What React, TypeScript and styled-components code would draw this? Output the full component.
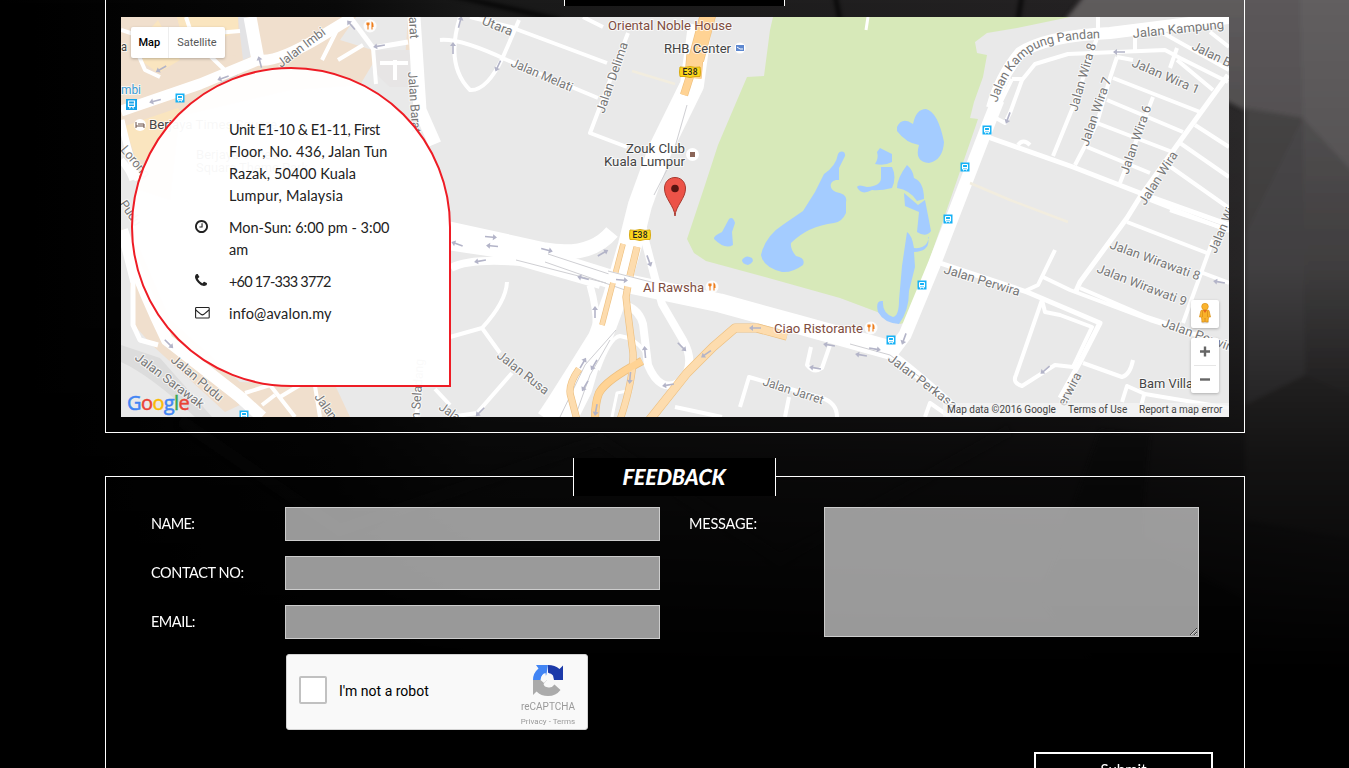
import React from 'react';
import styled, { createGlobalStyle } from 'styled-components';

const GlobalStyle = createGlobalStyle`
  * { box-sizing: border-box; }
  html, body { margin: 0; padding: 0; background: #000; }
  body { overflow: hidden; font-family: Lato, 'Open Sans', sans-serif; font-size: 15px; }
`;

const Page = styled.div`
  position: relative;
  width: 1349px;
  height: 768px;
  overflow: hidden;
  background: #000;
`;

const Backdrop = styled.svg`
  position: absolute;
  inset: 0;
`;

const Container = styled.main`
  position: relative;
  width: 1140px;
  margin-left: 105px;
`;

const Panel = styled.section<{ $open?: 'top' | 'bottom' }>`
  position: relative;
  border: 1px solid #fff;
  ${(p) => p.$open === 'top' && 'border-top: 0; height: 433px; padding: 17px 15px 15px;'}
  ${(p) => p.$open === 'bottom' && 'border-bottom: 0; height: 292px; margin-top: 43px; padding: 30px 45px 0;'}
`;

const PanelTitle = styled.h2<{ $top: number; $left: number; $width: number }>`
  position: absolute;
  top: ${(p) => p.$top}px;
  left: ${(p) => p.$left}px;
  width: ${(p) => p.$width}px;
  height: 38px;
  margin: 0;
  display: flex;
  align-items: center;
  justify-content: center;
  background: #000;
  border: solid #fff;
  border-width: 0 1px;
`;

const BrushText = styled.span`
  color: #fff;
  font: italic 900 22px/38px Lato, sans-serif;
  white-space: nowrap;
  transform: scaleX(0.97) skewX(-3deg);
`;

const MapFrame = styled.div`
  position: relative;
  width: 1108px;
  height: 400px;
  overflow: hidden;
  font-family: Roboto, Arial, sans-serif;
`;

const MapDrawing = styled.svg`
  display: block;
`;

const MapTypes = styled.div`
  position: absolute;
  top: 10px;
  left: 10px;
  display: flex;
  height: 31px;
  background: #fff;
  border-radius: 2px;
  box-shadow: 0 1px 3px rgba(0, 0, 0, 0.25);
  font-size: 11px;
  line-height: 31px;
`;

const MapType = styled.span<{ $active?: boolean }>`
  padding: 0 8px 0 ${(p) => (p.$active ? 7.5 : 8)}px;
  color: ${(p) => (p.$active ? '#000' : '#565656')};
  font-weight: ${(p) => (p.$active ? 500 : 400)};
  & + & { border-left: 1px solid #eee; }
`;

const MapControls = styled.div`
  position: absolute;
  right: 10px;
  bottom: 24px;
  width: 28px;
  display: flex;
  flex-direction: column;
  gap: 10px;
`;

const ControlBox = styled.div`
  display: flex;
  flex-direction: column;
  align-items: center;
  background: #fff;
  border-radius: 2px;
  box-shadow: 0 1px 3px rgba(0, 0, 0, 0.25);
  svg { display: block; }
`;

const ControlLine = styled.i`
  width: 22px;
  height: 1px;
  background: #e6e6e6;
`;

const Attribution = styled.div`
  position: absolute;
  right: 0;
  bottom: 0;
  height: 14px;
  display: flex;
  gap: 12px;
  padding: 0 7px 0 4px;
  background: rgba(245, 245, 245, 0.7);
  color: #444;
  font-size: 10px;
  line-height: 14px;
`;

const Credit = styled.span<{ $width: number }>`
  width: ${(p) => p.$width}px;
  white-space: nowrap;
`;

const GoogleMark = styled.div`
  position: absolute;
  left: 6px;
  bottom: 2px;
  font: 400 20px/24px 'Open Sans', sans-serif;
  letter-spacing: -0.6px;
  -webkit-text-stroke: 0.5px currentColor;
`;

const Letter = styled.span<{ $color: string }>`
  color: ${(p) => p.$color};
`;

const ContactBubble = styled.address`
  position: absolute;
  left: 10px;
  top: 50px;
  width: 320px;
  height: 320px;
  padding: 50px 50px 0 62px;
  display: flex;
  flex-direction: column;
  gap: 10px;
  border: 2px solid #ee1c25;
  border-radius: 50% 50% 0 50%;
  background: rgba(255, 255, 255, 0.96);
  color: #222;
  font: normal 14.5px/22px Lato, sans-serif;
`;

const ContactRow = styled.div`
  display: grid;
  grid-template-columns: 34px 1fr;
  svg { margin-top: 3px; }
`;

const ContactLine = styled.span<{ $spacing: number }>`
  display: block;
  white-space: nowrap;
  letter-spacing: ${(p) => p.$spacing}px;
`;

const FormGrid = styled.form`
  display: grid;
  grid-template-columns: 509px 510px;
  column-gap: 29px;
`;

const Fields = styled.div`
  display: flex;
  flex-direction: column;
  gap: 15px;
`;

const Field = styled.label<{ $labelWidth: number }>`
  display: grid;
  grid-template-columns: ${(p) => p.$labelWidth}px 375px;
`;

const FieldName = styled.span<{ $spacing: number }>`
  color: #fff;
  font-size: 14.5px;
  line-height: 33px;
  letter-spacing: ${(p) => p.$spacing}px;
`;

const TextInput = styled.input`
  height: 34px;
  border: 1px solid #ccc;
  border-radius: 0;
  background: rgba(255, 255, 255, 0.6);
`;

const MessageInput = styled.textarea`
  height: 130px;
  width: 375px;
  border: 1px solid #ccc;
  background: rgba(255, 255, 255, 0.6);
`;

const Captcha = styled.div`
  width: 302px;
  height: 76px;
  margin-left: 135px;
  display: flex;
  align-items: center;
  padding: 0 11px 0 12px;
  border: 1px solid #d3d3d3;
  border-radius: 3px;
  background: #f9f9f9;
  font-family: Roboto, sans-serif;
`;

const CheckBox = styled.span`
  width: 28px;
  height: 28px;
  margin-top: -4px;
  border: 2px solid #c1c1c1;
  border-radius: 2px;
  background: #fff;
`;

const CaptchaText = styled.span`
  flex: 1;
  margin: -2px 0 0 12px;
  color: #000;
  font-size: 14px;
`;

const CaptchaBrand = styled.div`
  width: 56px;
  padding-top: 9px;
  display: flex;
  flex-direction: column;
  align-items: center;
  color: #9a9a9a;
  white-space: nowrap;
`;

const BrandName = styled.span`
  margin-top: 4px;
  font-size: 10px;
  line-height: 14px;
`;

const BrandLinks = styled.span`
  font-size: 8px;
  line-height: 15px;
`;

const SubmitButton = styled.button`
  display: block;
  width: 179px;
  height: 38px;
  margin: 22px 0 0 883px;
  border: 2px solid #fff;
  background: #000;
  color: #fff;
  font: 15px/31px Lato, sans-serif;
  padding: 0 0 3px;
`;

type Pt = string;

const cityBlocks: Pt[] = [
  '121,17 356,17 340,40 405,60 408,17 345,17 420,17 405,75 375,60 360,85 290,90 121,130',
  '121,130 135,118 180,110 170,200 140,190',
  '122,228 138,270 160,330 250,400 258,417 350,417 335,385 240,382 170,320 140,250',
  '130,283 140,283 166,340 240,405 225,412 152,345 134,325',
];
const warmBlocks: Pt[] = [
  '142,38 158,20 168,38 180,60 158,73 143,62',
  '177,17 238,17 238,32 198,49 182,36',
  '125,126 178,108 185,118 150,160 136,160',
];

const park =
  'M773 17L770 30L764 76L747 77L738 98L718 145L705 185L687 239L694 253L706 261L765 277L840 298L880 313L900 324L908 322L975 128L978 119L970 118L974 102L983 77L987 55L977 53L975 42L987 33L1017 28L1070 17Z';

const ponds = [
  'M838 154C840 150 846 151 845 156L839 168V180C829 179 828 189 836 192Q848 194 846 202V213Q842 222 834 223Q808 226 791 243Q790 249 796 256Q806 258 803 265Q792 273 782 272Q763 267 761 255Q765 236 784 224L803 211L815 192L824 174Q836 166 838 154Z',
  'M729 219Q733 216 735 223L732 232L733 245Q725 250 714 239Q713 236 722 232Z',
  'M742 260Q746 254 752 258Q755 262 748 265Q742 264 742 260Z',
  'M880 148L892 154V162Q885 166 875 164Q879 158 877 152Z',
  'M881 167L892 167Q897 177 892 188Q880 191 872 190Q861 196 857 187Q858 184 867 187Q881 186 881 178Z',
  'M897 127Q902 116 913 124Q916 109 926 109Q938 112 944 142Q943 160 929 163Q914 162 919 145Q906 143 897 131Z',
  'M907 165Q913 170 914 178Q924 182 924 199L917 201Q910 190 897 188Q897 178 907 165Z',
  'M904 193L918 205L925 200L931 231Q926 238 917 232L919 212L905 206Z',
  'M907 232Q912 235 914 248Q923 249 927 243Q930 236 928 237Q931 251 914 252L915 267L909 291Q909 311 899 324Q884 323 878 312Q875 300 883 301Q882 313 893 317Q899 316 899 300L902 266Z',
];

type Road = [string, number, string?];
const roads: Road[] = [
  ['M121 111L200 84L258 60Q277 63 320 37L353 17', 11],
  ['M250 17L258 60', 13],
  ['M414 17L420 110L435 144', 13],
  ['M350 17L373 48L408 42', 5],
  ['M373 48L376 84M380 63H408M395 60V80M363 45L338 60M322 60L337 30M186 17L192 35L207 53L230 75M192 35L240 31M134 45L145 70L160 77M121 30L140 36', 4],
  ['M121 120Q130 160 138 180M121 160Q130 170 133 180', 7],
  ['M122 230Q140 285 167 340L240 397L262 417', 12],
  ['M122 240L133 283V325L140 340L158 345', 5],
  ['M245 393L270 385L295 417M262 405L275 395M280 397L305 382M315 386L320 417M417 380Q420 400 416 417M435 389L450 405', 4],
  ['M445 240Q500 248 530 254L620 282L720 303L800 325L890 350', 19],
  ['M445 228Q500 240 545 250Q590 258 612 232', 15],
  ['M451 268Q470 258 520 262L600 285', 8],
  ['M700 25L692 85L660 150L640 205L630 245L614 300L600 338L580 370L558 405L548 420', 24],
  ['M627 270L598 345L585 390L570 420', 14],
  ['M640 210L645 240L655 278L662 304L683 340Q697 365 680 382Q660 394 648 365L643 324Q639 310 627 306', 8],
  ['M590 285Q597 310 596 325', 7],
  ['M598 370Q610 337 620 336Q635 338 645 352', 4],
  ['M612 417L617 393L632 390', 3],
  ['M998 100L990 120L958 203L934 265L905 335L890 355', 13],
  ['M992 108Q1000 77 1020 53Q1045 36 1110 33L1229 18', 12],
  ['M994 117L1005 123L1010 113L1022 80L1035 64L1068 54L1165 50L1180 58L1228 82M1012 79H1022M994 116L1012 79', 4],
  ['M985 136L1073 167L1140 193L1229 225M1228 75L1183 137L1140 197L1127 218L1080 282L1076 291', 5],
  ['M1053 156L1073 107L1098 35V17M1117 57L1110 78L1097 123L1075 165M1153 97L1120 183M1135 33V50M1113 78L1200 112M1107 100L1183 132M1097 123L1175 153M1087 147L1150 173M1117 57L1133 60M1195 125L1229 147M1180 143L1229 177M1168 165L1229 208M1150 200L1229 231M1177 48L1170 68M1177 60L1213 90M1163 33L1229 70M1210 32L1229 47', 4],
  ['M1018 145Q1023 138 1030 145M1127 222L1207 253M1170 210L1229 230M1213 240L1183 323M1203 273L1229 283', 4],
  ['M940 263L1027 292L1100 323L1080 362L1060 398', 5],
  ['M1042 300L1045 312L1060 315L1092 327L1073 367L1055 365L1022 386Q1012 383 1016 375L1042 300M1055 250L1038 285L1025 291M1043 277L1070 290L1150 320L1229 345M1080 288L1147 317L1190 331M1083 363L1122 377Q1130 375 1133 360M1122 402L1127 386L1145 394L1229 408M1144 395L1140 410', 4],
  ['M870 340Q900 357 958 411L968 420', 8],
  ['M507 282Q506 302 482 328L450 337M482 328L500 353M512 373L477 413L450 417M740 407L749 377L822 398Q837 403 837 417M789 397L785 417M811 347L807 365Q814 374 822 368L830 345M925 417L930 403L950 417M675 407L722 417', 4],
  ['M440 40Q460 38 507 60L598 98M519 20L503 57Q487 91 470 90Q445 65 460 17M513 28L607 63M583 17L603 27M628 33L590 133L627 147M470 17L515 28', 4],
  ['M868 17L866 30', 3],
  ['M632 71L675 84M970 183L1010 200L1068 222', 2.5, '#f2eddf'],
];

const ramps: Road[] = [
  ['M708 15L696 60', 15],
  ['M695 55L693 78', 16],
  ['M692 70L684 95', 7],
  ['M623 244L602 325', 4.5],
  ['M637 247L629 280L626 297Q628 315 633 353Q634 378 620 420', 6],
  ['M642 361Q606 380 599 393Q595 403 595 420', 7],
  ['M579 369Q567 386 571 397L577 420', 6],
  ['M787 336L757 328H735L713 347L687 373L648 422', 8],
];

const streetArrows: [number, number, number][] = [
  [161, 69, 150], [223, 78, 160], [155, 101, 165], [260, 62, 255], [351, 25, 230], [379, 46, 170],
  [460, 22, 285], [453, 48, 270], [498, 66, 115], [491, 237, 5], [492, 246, 185], [457, 244, 200],
  [480, 261, 170], [547, 250, 15], [603, 253, 330], [583, 278, 195], [622, 280, 5], [649, 261, 70],
  [595, 312, 270], [583, 363, 300], [594, 365, 120], [585, 386, 120], [596, 410, 100], [630, 378, 95],
  [645, 352, 265], [682, 347, 45], [668, 385, 170], [706, 354, 145], [755, 328, 180], [829, 345, 190],
  [861, 355, 190], [875, 349, 10], [904, 339, 110], [815, 368, 190], [1119, 52, 180], [1008, 118, 110],
  [1219, 282, 190], [1045, 370, 140], [480, 412, 135], [169, 344, 45],
];

const buses: [number, number][] = [[180, 98], [987, 130], [965, 167], [948, 219], [922, 285], [891, 340], [244, 415]];

interface Label {
  text: string;
  x: number;
  y: number;
  angle?: number;
  length: number;
  tone?: 'street' | 'place' | 'food' | 'transit';
}

const labels: Label[] = [
  { text: 'Jalan Imbi', x: 281, y: 68, angle: -37, length: 57 },
  { text: 'arat', x: 409, y: 17, angle: 87, length: 22 },
  { text: 'Jalan Barat', x: 408, y: 72, angle: 86, length: 61 },
  { text: 'Utara', x: 481, y: 24, angle: 22, length: 32 },
  { text: 'Jalan Melati', x: 510, y: 66, angle: 23, length: 66 },
  { text: 'Jalan Delima', x: 604, y: 114, angle: -71, length: 74 },
  { text: 'Lorong', x: 120, y: 150, angle: 50, length: 38 },
  { text: 'Pudu', x: 119, y: 204, angle: 55, length: 28 },
  { text: 'Jalan Sarawak', x: 134, y: 359, angle: 37, length: 83 },
  { text: 'Jalan Pudu', x: 170, y: 361, angle: 40, length: 64 },
  { text: 'Jalan', x: 314, y: 397, angle: 55, length: 29 },
  { text: 'Jalan Seladang', x: 418, y: 442, angle: -86, length: 83 },
  { text: 'Jalan', x: 438, y: 409, angle: 35, length: 29 },
  { text: 'Jalan Rusa', x: 496, y: 357, angle: 38, length: 62 },
  { text: 'Jalan Jarret', x: 762, y: 385, angle: 18, length: 63 },
  { text: 'Jalan Perkasa', x: 887, y: 360, angle: 37, length: 83 },
  { text: 'Jalan Perwira', x: 943, y: 273, angle: 17, length: 79 },
  { text: 'Jalan Kampung', x: 1133, y: 38, angle: -6, length: 92 },
  { text: 'Jalan B', x: 1191, y: 49, angle: 26, length: 42 },
  { text: 'Jalan Wira 1', x: 1131, y: 66, angle: 23, length: 72 },
  { text: 'Jalan Wira 8', x: 1077, y: 112, angle: -74, length: 70 },
  { text: 'Jalan Wira 7', x: 1088, y: 147, angle: -71, length: 72 },
  { text: 'Jalan Wira 6', x: 1128, y: 175, angle: -71, length: 72 },
  { text: 'Jalan Wira', x: 1145, y: 206, angle: -57, length: 61 },
  { text: 'Jalan Wira', x: 1216, y: 254, angle: -67, length: 59 },
  { text: 'Jalan Wirawati 8', x: 1109, y: 248, angle: 20, length: 95 },
  { text: 'Jalan Wirawati 9', x: 1096, y: 272, angle: 21, length: 95 },
  { text: 'Jalan Perwira', x: 1161, y: 326, angle: 20, length: 79 },
  { text: 'erwira', x: 1065, y: 407, angle: -62, length: 36 },
  { text: 'Oriental Noble House', x: 608, y: 30, length: 124, tone: 'food' },
  { text: 'RHB Center', x: 664, y: 53, length: 67, tone: 'place' },
  { text: 'Zouk Club', x: 626, y: 153, length: 59, tone: 'place' },
  { text: 'Kuala Lumpur', x: 604, y: 166, length: 81, tone: 'place' },
  { text: 'Al Rawsha', x: 643, y: 292, length: 61, tone: 'food' },
  { text: 'Ciao Ristorante', x: 774, y: 333, length: 89, tone: 'food' },
  { text: 'Bam Villa', x: 1139, y: 388, length: 54, tone: 'place' },
  { text: 'Berjaya Times Square', x: 149, y: 129, length: 128, tone: 'place' },
  { text: 'Berjaya Times', x: 196, y: 159, length: 82, tone: 'place' },
  { text: 'Square Theme Park', x: 196, y: 172, length: 112, tone: 'place' },
  { text: 'mbi', x: 121, y: 94, length: 20, tone: 'transit' },
  { text: 'a', x: 121, y: 51, length: 6, tone: 'place' },
];

const toneColor = { street: '#777', place: '#444', food: '#804d3f', transit: '#3a9bd5' };

const MapLabel = styled.text`
  font-family: Roboto, sans-serif;
  font-size: 12.7px;
  paint-order: stroke;
  stroke: #fff;
  stroke-opacity: 0.7;
  stroke-width: 2px;
  stroke-linejoin: round;
`;

const Shield = ({ x, y }: { x: number; y: number }) => (
  <g transform={`translate(${x} ${y})`}>
    <path d="M-10 -5Q-5 -4 0 -5.500Q5 -4 10 -5L10.500 0L10 4.500Q5 4 0 5.500Q-5 4 -10 4.500L-10.500 0Z" fill="#fcd51c" stroke="#d8aa10" strokeWidth="1" />
    <text x="-7.5" y="3.2" fontSize="8.5" fontWeight="500" fill="#222" textLength="15">E38</text>
  </g>
);

const BusStop = ({ x, y }: { x: number; y: number }) => (
  <g transform={`translate(${x - 4.5} ${y - 4.5})`}>
    <rect width="9" height="9" fill="#16b1f5" />
    <rect x="2" y="2" width="5" height="4.6" rx="0.6" fill="none" stroke="#fff" strokeWidth="1.1" />
    <path d="M2 5H7M2.5 7.5H3.5M5.5 7.5H6.5" stroke="#fff" />
  </g>
);

const Cutlery = ({ x, y }: { x: number; y: number }) => (
  <g transform={`translate(${x} ${y})`}>
    <circle r="6.5" fill="#fff" opacity=".85" />
    <path d="M-3 -3.5V-1.5Q-2 0 -1 -1.5V-3.5M-2 -3.5V3.5M2 3.5V-3.5Q3.3 -2.500 3 .5H2" fill="none" stroke="#ee7d1b" strokeWidth="1.1" />
  </g>
);

const StreetMap = () => (
  <MapDrawing width="1108" height="400" viewBox="121 17 1108 400">
    <rect x="121" y="17" width="1108" height="400" fill="#e9e9e9" />
    {cityBlocks.map((p) => <polygon key={p} points={p} fill="#f0dfcd" />)}
    {warmBlocks.map((p) => <polygon key={p} points={p} fill="#fae5bf" />)}
    <path d="M204 17H246L258 60L230 55L210 40Z" fill="#f0dfcd" />
    <path d="M177 17H238V31L200 48L182 35Z" fill="#fae5bf" />
    <path d="M375 50H410V87H390L372 70Z" fill="#e7e5e5" />
    <path d="M238 17H246L254 45L250 57L243 60Z" fill="#e3e3e5" />
    <path d="M121 345L160 358L212 417H195Q150 375 121 362Z" fill="#dcdcdc" />
    <path d={park} fill="#d7e9b9" />
    {ponds.map((d) => <path key={d} d={d} fill="#a4ccff" />)}
    {roads.map(([d, w, c]) => (
      <path key={d} d={d} fill="none" stroke={c || '#fff'} strokeWidth={w} strokeLinejoin="round" />
    ))}
    <path d="M220 83L238 75M687 105L675 147M672 160L654 195M516 260L606 283M548 254L612 275M545 262L625 290M616 330L585 365L560 417M610 340L590 375L575 417M850 344L890 355L940 392" fill="none" stroke="#cfcfd3" strokeWidth="1" />
    {ramps.map(([d, w]) => <path key={d} d={d} fill="none" stroke="#edbf7e" strokeWidth={w + 1.2} strokeLinejoin="round" />)}
    {ramps.map(([d, w]) => <path key={`${d}in`} d={d} fill="none" stroke={w > 6.5 && w !== 8 ? '#ffd394' : '#fddcae'} strokeWidth={w} strokeLinejoin="round" />)}
    <path d="M608 276L655 288" stroke="#fff" strokeWidth="11" />
    <path d="M608 271L655 283" stroke="#cfcfd3" />
    {streetArrows.map(([x, y, a]) => (
      <path key={`${x}-${y}`} transform={`translate(${x} ${y}) rotate(${a})`} d="M-6 -.8H2V-3L6 0L2 3V.8H-6Z" fill="#b3b4c8" />
    ))}
    {labels.map((l) => (
      <MapLabel
        key={`${l.text}${l.x}`}
        x={l.x}
        y={l.y}
        textLength={l.length}
        lengthAdjust="spacingAndGlyphs"
        fill={toneColor[l.tone || 'street']}
        transform={l.angle ? `rotate(${l.angle} ${l.x} ${l.y})` : undefined}
      >
        {l.text}
      </MapLabel>
    ))}
    <path id="pandan" d="M997 103Q1009 64 1036 49Q1060 38 1112 38" fill="none" />
    <MapLabel fill="#777"><textPath href="#pandan" textLength="134">Jalan Kampung Pandan</textPath></MapLabel>
    {buses.map(([x, y]) => <BusStop key={x} x={x} y={y} />)}
    <g transform="translate(126 99)">
      <rect width="11" height="11" fill="#16a4ea" />
      <path d="M2.5 2H8.5V7.5H2.5ZM2.5 5H8.5M3.5 9.5L4.5 7.5M7.5 9.5L6.5 7.5" fill="none" stroke="#fff" strokeWidth="1.2" />
    </g>
    <Shield x={690} y={72} />
    <Shield x={640} y={235} />
    <Cutlery x={370} y={26} />
    <Cutlery x={712} y={287} />
    <Cutlery x={871} y={328} />
    <circle cx="140" cy="125" r="6" fill="#fff" />
    <path d="M136 122V128M136 126H144V128M138 124H144V126" fill="none" stroke="#6b5147" />
    <circle cx="692.500" cy="154.500" r="6.500" fill="#fff" />
    <rect x="690" y="152" width="5" height="5" fill="#8a6558" />
    <circle cx="740" cy="48" r="5.500" fill="#fff" />
    <path d="M736 45H744V51H736Z" fill="#5d87cf" />
    <path d="M737 47L740 49H743" fill="none" stroke="#fff" />
    <path d="M675 216C674.500 206 664 198 664.500 188C665 174 685 174 685.500 188C686 198 675.500 206 675 216Z" fill="#ec5348" stroke="#a8382e" strokeWidth="1" />
    <circle cx="675" cy="188.500" r="3.800" fill="#571410" />
  </MapDrawing>
);

const ClockIcon = () => (
  <svg width="13" height="13" viewBox="128 128 1536 1536" fill="#222">
    <path d="M1024 544v448q0 14-9 23t-23 9h-320q-14 0-23-9t-9-23v-64q0-14 9-23t23-9h224v-352q0-14 9-23t23-9h64q14 0 23 9t9 23zm416 352q0-148-73-273t-198-198-273-73-273 73-198 198-73 273 73 273 198 198 273 73 273-73 198-198 73-273zm224 0q0 209-103 385.500t-279.500 279.500-385.500 103-385.500-103-279.500-279.500-103-385.500 103-385.500 279.500-279.500 385.500-103 385.500 103 279.500 279.500 103 385.500z" />
  </svg>
);

const PhoneIcon = () => (
  <svg width="12" height="12" viewBox="0 128 1408 1408" fill="#222">
    <path d="M1408 1240q0 27-10 70.500t-21 68.500q-21 50-122 106-94 51-186 51-27 0-53-3.500t-57.500-12.500-47-14.500-55.500-20.500-49-18q-98-35-175-83-127-79-264-216t-216-264q-48-77-83-175-3-9-18-49t-20.500-55.500-14.500-47-12.500-57.500-3.500-53q0-92 51-186 56-101 106-122 25-11 68.500-21t70.500-10q14 0 21 3 18 6 53 76 11 19 30 54t35 63.500 31 53.500q3 4 17.500 25t21.500 35.500 7 28.500q0 20-28.500 50t-62 55-62 53-28.500 46q0 9 5 22.500t8.500 20.500 14 24 11.500 19q76 137 174 235t235 174q2 1 19 11.500t24 14 20.500 8.500 22.500 5q18 0 46-28.500t53-62 55-62 50-28.500q14 0 28.500 7t35.500 21.500 25 17.500q25 15 53.500 31t63.500 35 54 30q70 35 76 53 3 7 3 21z" />
  </svg>
);

const MailIcon = () => (
  <svg width="15" height="14" viewBox="0 0 15 14" fill="none" stroke="#222" strokeWidth="1.100">
    <rect x=".6" y="1.500" width="13.600" height="10.500" rx=".8" />
    <path d="M.8 4L6 8.300Q7.400 9.400 8.800 8.300L14 4" />
  </svg>
);

const Pegman = () => (
  <svg width="28" height="28" viewBox="0 0 28 28">
    <ellipse cx="14" cy="22" rx="4" ry="1.600" fill="#ddd" />
    <path d="M10 10.500Q14 8.500 18 10.500L19.500 17H17.500L17 22H14.500L14 18L13.500 22H11L10.500 17H8.500Z" fill="#f9b22b" stroke="#d98d13" strokeWidth=".7" />
    <path d="M11.500 11V17M16.500 11V17" stroke="#d98d13" strokeWidth=".7" />
    <circle cx="14" cy="6.600" r="3.300" fill="#fbb42e" stroke="#d98d13" strokeWidth=".6" />
    <path d="M12 10L14 13L16 10Z" fill="#e4671f" />
  </svg>
);

const RecaptchaLogo = () => (
  <svg width="32" height="32" viewBox="0 0 32 32">
    <path d="M31 16V1.500L27.500 5Q23 1 16 1L16 9Q19.500 9 21 11.500L17 16Z" fill="#1c3aa9" />
    <path d="M16 1H4L6.500 4.500Q1 9 1 16H9Q9 10 13.500 9L14 13Z" fill="#4285f4" />
    <path d="M1 16V31L4.500 27.500Q9 32 16 32Q24 32 28.500 26L22.500 20.500Q20 24 16.500 23.500Q12 23 11.500 20L15 16Z" fill="#ababab" />
    <path d="M8.500 16Q9 11 13 10L13.500 12.500L16.500 8.500L18.500 12L21 11.500L22 16H15L12 19Z" fill="#f9f9f9" />
  </svg>
);

const Facets = () => (
  <Backdrop width="1349" height="768" viewBox="0 0 1349 768">
    <defs>
      <linearGradient id="shade" x1="0" y1="0" x2="0" y2="1">
        <stop offset="0" stopColor="#000" stopOpacity="0" />
        <stop offset=".35" stopColor="#000" stopOpacity=".18" />
        <stop offset=".6" stopColor="#000" stopOpacity=".68" />
        <stop offset=".88" stopColor="#000" />
      </linearGradient>
      <linearGradient id="side" x1="0" y1="0" x2="1" y2="0">
        <stop offset="0" stopColor="#000" />
        <stop offset=".25" stopColor="#0a0a0a" />
        <stop offset=".35" stopColor="#191919" />
        <stop offset=".8" stopColor="#242223" />
        <stop offset="1" stopColor="#353334" />
      </linearGradient>
      <linearGradient id="fold" x1="0" y1="0" x2="0" y2="1">
        <stop offset="0" stopColor="#5f5c5d" />
        <stop offset=".5" stopColor="#4f4d4e" />
        <stop offset="1" stopColor="#343233" />
      </linearGradient>
      <filter id="soften"><feGaussianBlur stdDeviation="2" /></filter>
    </defs>
    <rect width="1349" height="768" fill="url(#side)" />
    <g filter="url(#soften)">
      <path d="M1085 -5H1360V520L1245 480V110L1065 20Z" fill="url(#fold)" />
      <path d="M1245 -5H1300L1303 118L1245 108Z" fill="#5c595a" />
      <path d="M1300 -5H1360V180L1303 118Z" fill="#625f60" />
      <path d="M1245 108L1303 118L1245 235Z" fill="#4b494a" />
      <path d="M1303 118L1305 375L1245 405V235Z" fill="#504e4f" />
      <path d="M1305 375L1245 405V520L1360 540V400Z" fill="#3c3a3b" />
      <path d="M1100 430L1150 435L1140 540L1245 600V720H1140L1040 600Z" fill="#1c1b1c" />
      <path d="M450 -5L560 20M835 -5L840 20M1022 -5L1018 20" stroke="#090909" strokeWidth="3" />
      <path d="M180 420L340 530L600 440L780 560L1010 430" fill="none" stroke="#1a1a1a" strokeWidth="12" opacity=".3" />
    </g>
    <rect width="1349" height="768" fill="url(#shade)" />
  </Backdrop>
);

const googleLetters: [string, string][] = [
  ['G', '#4285f4'], ['o', '#ea4335'], ['o', '#fbbc05'], ['g', '#4285f4'], ['l', '#34a853'], ['e', '#ea4335'],
];

export default function App() {
  return (
    <Page>
      <GlobalStyle />
      <Facets />
      <Container>
        <Panel $open="top">
          <PanelTitle $top={-32} $left={458} $width={221} />
          <MapFrame>
            <StreetMap />
            <ContactBubble>
              <ContactRow>
                <span />
                <div>
                  <ContactLine $spacing={-0.45}>Unit E1-10 &amp; E1-11, First</ContactLine>
                  <ContactLine $spacing={0.1}>Floor, No. 436, Jalan Tun</ContactLine>
                  <ContactLine $spacing={0.1}>Razak, 50400 Kuala</ContactLine>
                  <ContactLine $spacing={0.25}>Lumpur, Malaysia</ContactLine>
                </div>
              </ContactRow>
              <ContactRow>
                <ClockIcon />
                <div>
                  <ContactLine $spacing={0}>Mon-Sun: 6:00 pm - 3:00</ContactLine>
                  <ContactLine $spacing={0}>am</ContactLine>
                </div>
              </ContactRow>
              <ContactRow>
                <PhoneIcon />
                <ContactLine $spacing={-0.8}>+60 17-333 3772</ContactLine>
              </ContactRow>
              <ContactRow>
                <MailIcon />
                <ContactLine $spacing={0.15}>info@avalon.my</ContactLine>
              </ContactRow>
            </ContactBubble>
            <MapTypes>
              <MapType $active>Map</MapType>
              <MapType>Satellite</MapType>
            </MapTypes>
            <GoogleMark>
              {googleLetters.map(([c, color], i) => <Letter key={i} $color={color}>{c}</Letter>)}
            </GoogleMark>
            <MapControls>
              <ControlBox><Pegman /></ControlBox>
              <ControlBox>
                <svg width="28" height="27" viewBox="0 0 28 27"><path d="M9 13.500H19M14 8.500V18.500" stroke="#666" strokeWidth="2.400" /></svg>
                <ControlLine />
                <svg width="28" height="27" viewBox="0 0 28 27"><path d="M9 13.500H19" stroke="#666" strokeWidth="2.400" /></svg>
              </ControlBox>
            </MapControls>
            <Attribution>
              <Credit $width={109}>Map data ©2016 Google</Credit>
              <Credit $width={59}>Terms of Use</Credit>
              <Credit $width={83}>Report a map error</Credit>
            </Attribution>
          </MapFrame>
        </Panel>
        <Panel $open="bottom">
          <PanelTitle $top={-19} $left={467} $width={203}><BrushText>FEEDBACK</BrushText></PanelTitle>
          <FormGrid>
            <Fields>
              <Field $labelWidth={134}><FieldName $spacing={-0.6}>NAME:</FieldName><TextInput /></Field>
              <Field $labelWidth={134}><FieldName $spacing={-0.4}>CONTACT NO:</FieldName><TextInput /></Field>
              <Field $labelWidth={134}><FieldName $spacing={-0.5}>EMAIL:</FieldName><TextInput /></Field>
              <Captcha>
                <CheckBox />
                <CaptchaText>I'm not a robot</CaptchaText>
                <CaptchaBrand>
                  <RecaptchaLogo />
                  <BrandName>reCAPTCHA</BrandName>
                  <BrandLinks>Privacy - Terms</BrandLinks>
                </CaptchaBrand>
              </Captcha>
            </Fields>
            <Field $labelWidth={135}><FieldName $spacing={-0.2}>MESSAGE:</FieldName><MessageInput /></Field>
          </FormGrid>
          <SubmitButton type="button">Submit</SubmitButton>
        </Panel>
      </Container>
    </Page>
  );
}
